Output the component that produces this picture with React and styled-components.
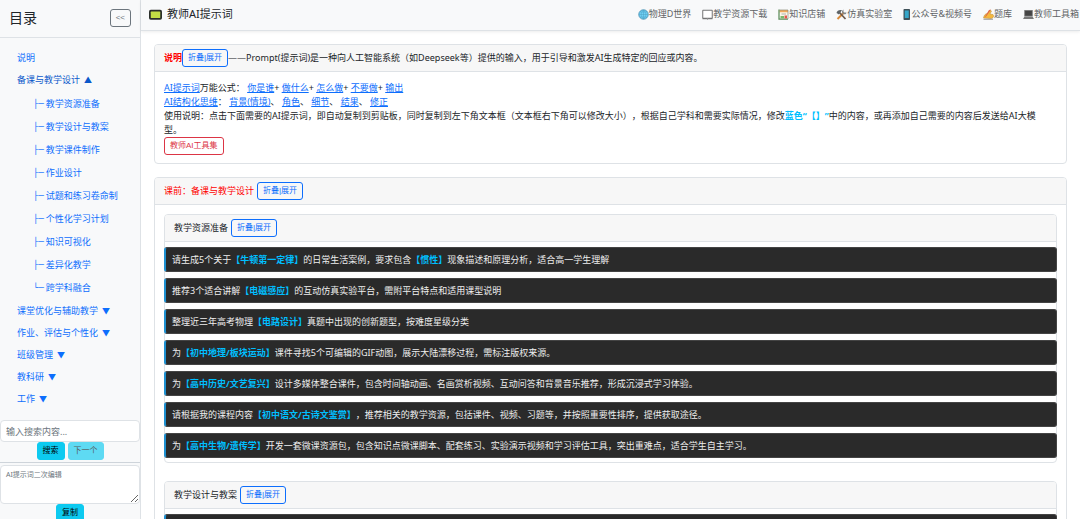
import React from "react";
import styled, { createGlobalStyle, css } from "styled-components";

const Global = createGlobalStyle`
  * { box-sizing: border-box; }
  body {
    margin: 0;
    background: #fff;
    color: #212529;
    font-family: "Noto Sans", "Noto Sans CJK SC", sans-serif;
    font-size: 9px;
    line-height: 14px;
    text-spacing-trim: space-all;
  }
  a { color: #0d6efd; }
  button, input, textarea { font-family: inherit; }
`;

const Page = styled.div`
  display: flex;
  height: 100vh;
  overflow: hidden;
`;

const Sidebar = styled.aside`
  flex: 0 0 141px;
  border-right: 1px solid #dee2e6;
  background: #f8f9fa;
  overflow: hidden;
`;

const SideHead = styled.div`
  display: flex;
  align-items: center;
  justify-content: space-between;
  height: 38px;
  padding: 0 9px 2px;
  border-bottom: 1px solid #dee2e6;
`;

const SideTitle = styled.h2`
  margin: 0;
  font-size: 14px;
  line-height: 20px;
  font-weight: 400;
`;

const tones = {
  primary: css`color: #0d6efd; border-color: #0d6efd; background: transparent;`,
  danger: css`color: #dc3545; border-color: #dc3545; background: transparent;`,
  muted: css`color: #6c757d; border-color: #6c757d; background: transparent;`,
  info: css`color: #000; border-color: #0dcaf0; background: #0dcaf0;`,
};

const Button = styled.button`
  display: block;
  height: 18px;
  padding: 0 5px;
  border: 1px solid;
  border-radius: 3px;
  font-family: "Liberation Sans", "Noto Sans CJK SC", sans-serif;
  font-size: 8px;
  line-height: 14px;
  white-space: nowrap;
  cursor: pointer;
  ${(p) => tones[p.$tone || "primary"]}
  &:disabled { opacity: 0.65; }
`;

const Contents = styled.nav`
  padding: 9px 0 10px;
`;

const TopList = styled.ul`
  margin: 0;
  padding: 0;
  list-style: none;
`;

const SubList = styled(TopList)`
  padding: 1px 0 1px 16px;
`;

const SideLink = styled.a`
  display: flex;
  align-items: center;
  height: ${(p) => (p.$sub ? 23 : 22)}px;
  padding: 0 17px;
  white-space: nowrap;
  text-decoration: none;
  && { color: ${(p) => (p.$open ? "#0a58ca" : "#0d6efd")}; }
`;

const Branch = styled.span`
  margin-right: 2px;
  font-family: "Liberation Mono", monospace;
`;

const Arrow = styled.span`
  margin-left: 4px;
  font-size: 8px;
`;

const SearchForm = styled.form`
  border-bottom: 1px solid #ced4da;
  padding-bottom: 2px;
`;

const field = css`
  display: block;
  width: 100%;
  border: 1px solid #dee2e6;
  border-radius: 4px;
  background: #fff;
  color: #212529;
  &::placeholder { color: #6c757d; opacity: 1; }
`;

const SearchInput = styled.input`
  ${field}
  height: 22px;
  padding: 0 5px;
  font-size: 9px;
`;

const Editor = styled.textarea`
  ${field}
  height: 39px;
  margin-top: 2px;
  padding: 3px 5px;
  font-size: 7px;
  line-height: 11px;
  resize: vertical;
`;

const Actions = styled.div`
  display: flex;
  justify-content: center;
  gap: 3px;
`;

const Main = styled.div`
  flex: 1;
  min-width: 0;
  display: flex;
  flex-direction: column;
`;

const TopBar = styled.header`
  flex: none;
  display: flex;
  align-items: center;
  justify-content: space-between;
  height: 31px;
  padding: 0 1px 2px 8px;
  border-bottom: 1px solid #dee2e6;
  background: #f8f9fa;
  box-shadow: 0 1px 3px rgba(0, 0, 0, 0.08);
`;

const Brand = styled.h1`
  display: flex;
  align-items: center;
  gap: 5px;
  margin: 0;
  font-size: 11px;
  font-weight: 400;
  line-height: 16px;
  svg { width: 13px; height: 13px; }
`;

const Links = styled.nav`
  display: flex;
  gap: 11px;
`;

const NavLink = styled.a`
  display: flex;
  align-items: center;
  white-space: nowrap;
  text-decoration: none;
  && { color: #616466; }
  svg { height: 11px; }
`;

const Content = styled.main`
  flex: 1;
  min-height: 0;
  overflow: auto;
  scrollbar-width: none;
  padding: 13px 13px 0 13px;
`;

const Card = styled.section`
  margin-bottom: 13px;
  border: 1px solid #dee2e6;
  border-radius: 4px;
  background: #fff;
`;

const InnerCard = styled(Card)`
  margin-bottom: 18px;
`;

const CardHead = styled.div`
  display: flex;
  align-items: center;
  gap: ${(p) => (p.$tight ? 0 : 3)}px;
  height: 27px;
  padding: 0 9px;
  border-bottom: 1px solid #dee2e6;
  border-radius: 3px 3px 0 0;
  background: #f7f7f7;
`;

const Heading = styled.h3`
  margin: 0;
  font-size: 9px;
  font-weight: ${(p) => (p.$bold ? 700 : 400)};
  color: ${(p) => (p.$red ? "#f00" : "inherit")};
`;

const CardBody = styled.div`
  padding: 9px 9px 8px;
`;

const Intro = styled.p`
  margin: 0;
  padding-right: 17px;
`;

const Cyan = styled.strong`
  color: #00bfff;
`;

const PromptList = styled.div`
  display: flex;
  flex-direction: column;
  gap: 6px;
  margin: 0 -1px;
  padding: 5px 0 4px;
`;

const Prompt = styled.button`
  display: block;
  width: 100%;
  min-height: 25px;
  padding: 4px 6px;
  border: 1px solid #444;
  border-left: 2px solid #1e90d0;
  border-radius: 3px;
  background: #2a2a2a;
  color: #eee;
  font-size: 9px;
  line-height: 14px;
  text-align: left;
  cursor: pointer;
  strong { color: #00bfff; }
`;

const Icon = ({ children, w = 22 }) => (
  <svg viewBox={`0 0 ${w} 22`} width={w / 2} fill="none" aria-hidden="true">{children}</svg>
);

const icons = {
  board: (
    <Icon>
      <rect x="0" y="3" width="22" height="17" rx="3" fill="#2b2f2b" />
      <rect x="3" y="6" width="16" height="11" rx="1" fill="#c3df45" />
    </Icon>
  ),
  globe: (
    <Icon>
      <circle cx="11" cy="11" r="9.500" fill="#6fd0f5" stroke="#3a83a8" strokeWidth="1.500" />
      <path d="M2 11h18M11 2v18M4 6h14M4 16h14M11 2c-6 5-6 13 0 18M11 2c6 5 6 13 0 18" stroke="#4b9cc0" strokeWidth="0.900" />
    </Icon>
  ),
  book: (
    <Icon>
      <path d="M1.500 2.500h19v16h-19z" fill="#fff" stroke="#5c5c5c" strokeWidth="1.700" />
      <path d="M1 19.500h8l2 1 2-1h8" stroke="#5c5c5c" strokeWidth="1.500" />
    </Icon>
  ),
  shop: (
    <Icon>
      <path d="M3 2h17v5H3z" fill="#f0a95a" />
      <path d="M4 7h16v8H4z" fill="#fbf7e8" />
      <path d="M2 1v19h18" stroke="#5b8c5a" strokeWidth="2.500" />
      <path d="M3 2h17v18" stroke="#8a8a7a" strokeWidth="1.400" />
      <path d="M5 14h7v5H5z" fill="#7bb86b" />
      <path d="M13 13h5v6h-5z" fill="#e2574c" />
      <path d="M7 10h9" stroke="#999" strokeWidth="1.500" />
    </Icon>
  ),
  tools: (
    <Icon>
      <path d="M3 20 16 7" stroke="#d98b3a" strokeWidth="4" />
      <path d="m6 6 13 14" stroke="#6b5a4c" strokeWidth="3.500" />
      <path d="M1 8c1-5 5-7 11-6L6 11z" fill="#5e6468" />
      <path d="M15 1v6h6c0 4-6 5-8 2s-1-7 2-8z" fill="#80868a" />
    </Icon>
  ),
  phone: (
    <Icon w={16}>
      <rect x="1" y="0" width="13" height="22" rx="1.500" fill="#3e5058" />
      <rect x="3.500" y="3" width="8" height="15" fill="#35a6c9" />
    </Icon>
  ),
  write: (
    <Icon>
      <path d="M1 18c1-6 4-9 8-9l5-7 3 2-3 6 6 1c3 3 0 8-4 8z" fill="#f5b83d" stroke="#b98a3a" />
      <path d="m12 2 4-1-9 13-4 3z" fill="#e0674a" />
      <path d="M1 20.500h19" stroke="#777" strokeWidth="1.500" />
    </Icon>
  ),
  laptop: (
    <Icon>
      <rect x="3.500" y="3" width="15" height="11" fill="#444" stroke="#707070" strokeWidth="1.500" />
      <path d="M3 15h16l3 5H0z" fill="#777" />
    </Icon>
  ),
};

const navItems = [
  ["globe", "物理D世界"],
  ["book", "教学资源下载"],
  ["shop", "知识店铺"],
  ["tools", "仿真实验室"],
  ["phone", "公众号&视频号"],
  ["write", "题库"],
  ["laptop", "教师工具箱"],
];

const subItems = ["教学资源准备", "教学设计与教案", "教学课件制作", "作业设计", "试题和练习卷命制", "个性化学习计划", "知识可视化", "差异化教学", "跨学科融合"];
const closedItems = ["课堂优化与辅助教学", "作业、评估与个性化", "班级管理", "教科研", "工作"];

const prompts = [
  "请生成5个关于【牛顿第一定律】的日常生活案例，要求包含【惯性】现象描述和原理分析，适合高一学生理解",
  "推荐3个适合讲解【电磁感应】的互动仿真实验平台，需附平台特点和适用课型说明",
  "整理近三年高考物理【电路设计】真题中出现的创新题型，按难度星级分类",
  "为【初中地理/板块运动】课件寻找5个可编辑的GIF动图，展示大陆漂移过程，需标注版权来源。",
  "为【高中历史/文艺复兴】设计多媒体整合课件，包含时间轴动画、名画赏析视频、互动问答和背景音乐推荐，形成沉浸式学习体验。",
  "请根据我的课程内容【初中语文/古诗文鉴赏】，推荐相关的教学资源，包括课件、视频、习题等，并按照重要性排序，提供获取途径。",
  "为【高中生物/遗传学】开发一套微课资源包，包含知识点微课脚本、配套练习、实验演示视频和学习评估工具，突出重难点，适合学生自主学习。",
];
const planPrompts = ["请设计一份关于【牛顿第二定律】的教案，包含教学目标、重难点和教学过程"];

const withMarks = (text) =>
  text.split(/(【[^】]*】)/).map((part, i) => (part[0] === "【" ? <strong key={i}>{part}</strong> : part));

const L = ({ children }) => <a href="#term">{children}</a>;

const PromptCard = ({ title, items }) => (
  <InnerCard>
    <CardHead>
      <Heading>{title}</Heading>
      <Button>折叠|展开</Button>
    </CardHead>
    <PromptList>
      {items.map((t) => <Prompt key={t}>{withMarks(t)}</Prompt>)}
    </PromptList>
  </InnerCard>
);

export default function App() {
  return (
    <Page>
      <Global />
      <Sidebar>
        <SideHead>
          <SideTitle>目录</SideTitle>
          <Button $tone="muted">&lt;&lt;</Button>
        </SideHead>
        <Contents>
          <TopList>
            <li><SideLink href="#intro">说明</SideLink></li>
            <li>
              <SideLink href="#prepare" $open>备课与教学设计<Arrow>▲</Arrow></SideLink>
              <SubList>
                {subItems.map((t, i) => (
                  <li key={t}>
                    <SideLink href="#prepare" $sub>
                      <Branch>{i === subItems.length - 1 ? "└─" : "├─"}</Branch>{t}
                    </SideLink>
                  </li>
                ))}
              </SubList>
            </li>
            {closedItems.map((t) => <li key={t}><SideLink href="#more">{t}<Arrow>▼</Arrow></SideLink></li>)}
          </TopList>
        </Contents>
        <SearchForm onSubmit={(e) => e.preventDefault()}>
          <SearchInput aria-label="搜索" placeholder="输入搜索内容..." />
          <Actions>
            <Button $tone="info">搜索</Button>
            <Button $tone="info" type="button" disabled>下一个</Button>
          </Actions>
        </SearchForm>
        <Editor aria-label="AI提示词二次编辑" placeholder="AI提示词二次编辑" />
        <Actions><Button $tone="info">复制</Button></Actions>
      </Sidebar>
      <Main>
        <TopBar>
          <Brand>{icons.board}教师AI提示词</Brand>
          <Links>
            {navItems.map(([icon, label]) => (
              <NavLink key={label} href="#nav">{icons[icon]}{label}</NavLink>
            ))}
          </Links>
        </TopBar>
        <Content>
          <Card>
            <CardHead $tight>
              <Heading $red $bold>说明</Heading>
              <Button>折叠|展开</Button>
              <span>——Prompt(提示词)是一种向人工智能系统（如Deepseek等）提供的输入，用于引导和激发AI生成特定的回应或内容。</span>
            </CardHead>
            <CardBody>
              <Intro><L>AI提示词</L>万能公式： <L>你是谁</L>+ <L>做什么</L>+ <L>怎么做</L>+ <L>不要做</L>+ <L>输出</L></Intro>
              <Intro><L>AI结构化思维</L>： <L>背景(情境)</L>、 <L>角色</L>、 <L>细节</L>、 <L>结果</L>、 <L>修正</L></Intro>
              <Intro>
                使用说明：点击下面需要的AI提示词，即自动复制到剪贴板，同时复制到左下角文本框（文本框右下角可以修改大小），根据自己学科和需要实际情况，修改<Cyan>蓝色“【】”</Cyan>中的内容，或再添加自己需要的内容后发送给AI大模型。
              </Intro>
              <Button $tone="danger">教师AI工具集</Button>
            </CardBody>
          </Card>
          <Card>
            <CardHead>
              <Heading $red>课前：备课与教学设计</Heading>
              <Button>折叠|展开</Button>
            </CardHead>
            <CardBody>
              <PromptCard title="教学资源准备" items={prompts} />
              <PromptCard title="教学设计与教案" items={planPrompts} />
            </CardBody>
          </Card>
        </Content>
      </Main>
    </Page>
  );
}
